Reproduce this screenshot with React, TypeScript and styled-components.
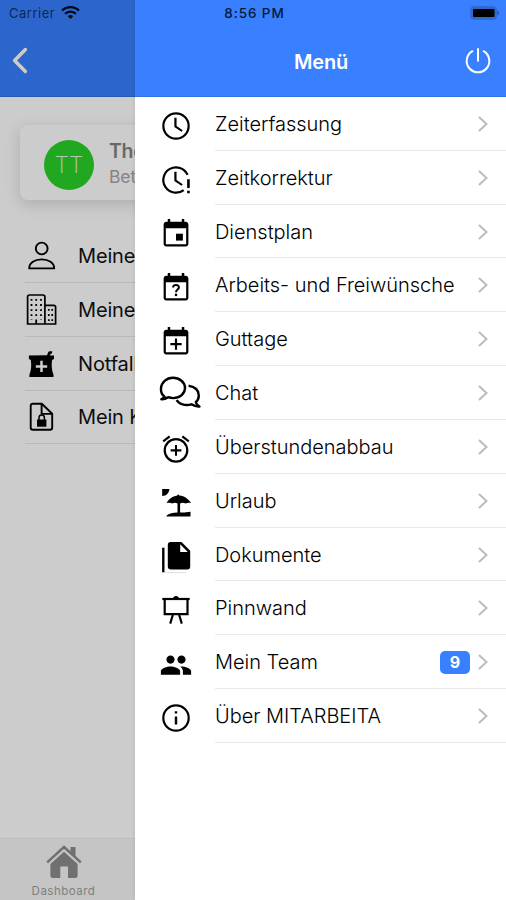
import React from "react";
import styled, { createGlobalStyle } from "styled-components";

const GlobalStyle = createGlobalStyle`
  * { box-sizing: border-box; }
  body { margin: 0; background: #fff; }
`;

const Screen = styled.div`
  position: relative;
  width: 506px;
  height: 900px;
  overflow: hidden;
  background: #fff;
  font-family: Inter, "Liberation Sans", sans-serif;
  color: #111;
`;

/* ---------- page below the drawer ---------- */

const Page = styled.div`
  display: flex;
  flex-direction: column;
  height: 100%;
`;

const PageHeader = styled.header`
  height: 97px;
  padding: 46px 0 0 11px;
  background: #3880ff;
  border-bottom: 1px solid #3171e0;
`;

const PageBody = styled.main`
  flex: 1;
  padding: 28px 20px 0;
`;

const ProfileCard = styled.section`
  display: flex;
  align-items: center;
  gap: 15px;
  height: 75px;
  padding: 5px 0 0 24px;
  border-radius: 8px;
  background: #fff;
  box-shadow: 0 4px 16px rgba(0, 0, 0, 0.16);
`;

const Avatar = styled.div`
  display: grid;
  place-items: center;
  width: 50px;
  height: 50px;
  border-radius: 50%;
  background: #28d228;
  color: #e2f8e2;
  font-size: 23px;
  font-weight: 200;
`;

const ProfileName = styled.div`
  margin-top: -3px;
  font-size: 19.5px;
  line-height: 26px;
  font-weight: 600;
  letter-spacing: -0.3px;
  color: #838383;
`;

const ProfileRole = styled.div`
  font-size: 17.5px;
  line-height: 25px;
  letter-spacing: -0.1px;
  color: #a6a6a6;
`;

const PageList = styled.ul`
  list-style: none;
  margin: 29px 0 0;
  padding: 0;
`;

const PageRow = styled.li`
  display: flex;
  align-items: center;
  gap: 14px;
  height: 53.85px;
  position: relative;
  font-size: 20px;
  letter-spacing: -0.15px;
  white-space: nowrap;

  &::after {
    content: "";
    position: absolute;
    left: 5px;
    right: 0;
    bottom: 0;
    height: 1px;
    background: #e8e8e8;
  }
`;

const TabBar = styled.nav`
  height: 62px;
  background: #f7f7f7;
  border-top: 1px solid #eeeeee;
`;

const Tab = styled.div`
  display: flex;
  flex-direction: column;
  align-items: center;
  width: 127px;
  padding-top: 6px;
  gap: 4px;
  color: #8c8c8c;
`;

const TabLabel = styled.span`
  font-size: 11.5px;
  line-height: 16px;
  letter-spacing: 0.5px;
  color: #a0a0a0;
`;

const Backdrop = styled.div`
  position: absolute;
  inset: 0;
  background: rgba(0, 0, 0, 0.2);
`;

/* ---------- drawer ---------- */

const Drawer = styled.aside`
  position: absolute;
  top: 0;
  right: 0;
  bottom: 0;
  width: 371px;
  background: #fff;
  box-shadow: 0 0 4px rgba(0, 0, 0, 0.12);
`;

const DrawerHeader = styled.header`
  display: grid;
  grid-template-columns: 44px 1fr 26px;
  align-items: center;
  height: 97px;
  padding: 26px 15px 0 0;
  background: #3880ff;
  border-bottom: 1px solid #3171e0;
  color: #fff;
`;

const DrawerTitle = styled.h1`
  grid-column: 2;
  margin: 0 2px 0 0;
  padding-top: 1px;
  text-align: center;
  font-size: 20px;
  font-weight: 600;
  letter-spacing: -0.2px;
`;

const MenuList = styled.ul`
  list-style: none;
  margin: 0;
  padding: 0 0 0 19px;
`;

const MenuRow = styled.li`
  display: flex;
  height: 53.83px;
`;

const MenuIcon = styled.span`
  flex: none;
  width: 61px;
  padding-top: 7.3px;
`;

const MenuContent = styled.div`
  flex: 1;
  display: flex;
  align-items: center;
  padding: 1px 18.5px 0 0;
  border-bottom: 1px solid #e9e9e9;
`;

const MenuLabel = styled.span`
  flex: 1;
  font-size: 20px;
  font-weight: 300;
  line-height: 26px;
  color: #000;
  letter-spacing: -0.02px;
  white-space: nowrap;
`;

const Badge = styled.span`
  width: 30px;
  height: 23px;
  margin-right: 7.5px;
  border-radius: 5px;
  background: #3880ff;
  color: #fff;
  font-size: 16px;
  line-height: 23px;
  font-weight: 700;
  text-align: center;
`;

/* ---------- status bar ---------- */

const StatusBar = styled.div`
  position: absolute;
  top: 0;
  left: 0;
  right: 0;
  display: grid;
  grid-template-columns: 1fr auto 1fr;
  align-items: center;
  height: 26px;
  padding: 0 6px 0 9px;
  font-size: 13px;
  color: #05183a;
`;

const StatusLeft = styled.div`
  display: flex;
  align-items: center;
  gap: 6px;
  letter-spacing: 0.5px;
  color: #0d2856;
`;

const StatusTime = styled.div`
  font-size: 13.5px;
  font-weight: 500;
  letter-spacing: 0.9px;
`;

const StatusRight = styled.div`
  display: flex;
  justify-content: flex-end;
`;

const Svg = styled.svg`
  display: block;
  flex: none;
  overflow: visible;
`;

/* ---------- icons ---------- */

type IconProps = { children: React.ReactNode };

/* 44px canvas, one unit per pixel */
const Canvas = ({ children }: IconProps) => (
  <Svg width="44" height="44" viewBox="0 0 44 44" fill="none" stroke="#000" strokeWidth="1.9">
    {children}
  </Svg>
);

/* 24-unit glyph enlarged to 33px in the middle of the 44px canvas */
const Glyph = ({ children }: IconProps) => (
  <Svg width="44" height="44" viewBox="-4 -4 32 32" fill="#000">
    {children}
  </Svg>
);

const CalendarFrame = () => (
  <path d="M16.200 1v2H7.800V1H6v2H5c-1.110 0-1.990.9-1.990 2L3 19c0 1.100.89 2 2 2h14c1.100 0 2-.9 2-2V5c0-1.100-.9-2-2-2h-1V1h-1.800zm3.200 18.400H4.600V7.800h14.800v11.600z" />
);

const ClockHands = () => <path d="M12.400 6h-1.600v6.700l5.200 3.500.9-1.200-4.500-3z" />;

const icons = {
  clock: (
    <Glyph>
      <circle cx="12" cy="12" r="9.200" fill="none" stroke="#000" strokeWidth="1.600" />
      <ClockHands />
    </Glyph>
  ),
  clockAlert: (
    <Glyph>
      <path
        d="M20.400 8.300A9.200 9.200 0 1 0 17.600 19.300"
        fill="none"
        stroke="#000"
        strokeWidth="1.600"
      />
      <ClockHands />
      <path d="M20.100 11.400H22v6.500h-1.900zM20.100 19.800H22v1.800h-1.900z" />
    </Glyph>
  ),
  calendar: (
    <Glyph>
      <CalendarFrame />
      <path d="M12 11.800h5v5h-5z" />
    </Glyph>
  ),
  calendarQuestion: (
    <Glyph>
      <CalendarFrame />
      <path
        d="M9.900 11.600c0-1.100.9-1.800 2.100-1.800s2.100.7 2.100 1.800c0 1.500-2.100 1.600-2.100 3.400"
        fill="none"
        stroke="#000"
        strokeWidth="1.500"
      />
      <circle cx="12" cy="17" r=".95" />
    </Glyph>
  ),
  calendarPlus: (
    <Glyph>
      <CalendarFrame />
      <path d="M11.200 9.400h1.600v3.300H16.100v1.600h-3.300v3.300h-1.600v-3.300H7.900v-1.600h3.300z" />
    </Glyph>
  ),
  chat: (
    <Canvas>
      <g transform="translate(0 -2.300)" strokeWidth="2.400" strokeLinejoin="round">
        <path d="M10.600 26C8 24.100 6.700 20.800 7 17.400 7.400 11.800 12.400 7.100 19 7.100S31 11.600 31 17.200 26 27.400 19.200 27.400c-2 0-3.600-.3-5.100-.9-1.900 1.300-4.300 2.200-6.800 2 1.500-.8 2.700-1.500 3.300-2.500z" />
        <path d="M34.600 15.100c6.400 1.100 10.200 4.600 10.200 9.600 0 2.700-1.100 5-3 6.800.6 2.400 2.200 3.500 3.700 4.300-3 .3-5.800-.7-8-2.200-6.400 1.900-12.600-.2-14.800-4.300" />
      </g>
    </Canvas>
  ),
  alarmAdd: (
    <Glyph>
      <path d="M7.880 3.390 6.900 2.100 2.200 5.900l.95 1.200 4.730-3.710zM21.800 5.900 17.100 2.100l-.98 1.290L20.850 7.100zM12 4c-4.970 0-9 4.030-9 9s4.020 9 9 9c4.970 0 9-4.030 9-9s-4.030-9-9-9zm0 16.400a7.400 7.400 0 1 1 0-14.800 7.400 7.400 0 0 1 0 14.800zM12.750 9.100h-1.500v3.150H8.100v1.500h3.150v3.150h1.500v-3.150h3.150v-1.500h-3.150z" />
    </Glyph>
  ),
  beach: (
    <Canvas>
      <g fill="#000" stroke="none">
        <path d="M8.200 8h7.200c-.2 3.800-3 6.900-7.200 7z" />
        <path d="M12.600 22.300c1.700-4.300 5.700-7 10.600-7.900l1-1.200 1.200 1.200c5 .6 9.500 3.500 11.800 7.900-2.100-.7-4-.6-5.700.3-1.800-1-3.600-1.100-5.400-.1v8.900h4.200l6.200-.6v4.700H12.600v-1c2.500-1.900 6-2.900 10.900-3V22.500c-1.800-.9-3.500-.9-5.200.1-1.700-.9-3.600-1.100-5.700-.3z" />
      </g>
    </Canvas>
  ),
  documents: (
    <Canvas>
      <path d="M9.300 12.700v24.700" strokeWidth="2.400" />
      <path d="M9.300 37.600h22.500" stroke="#dedede" strokeWidth="1" />
      <path
        d="M17 7h10.500l8.700 8.800v15.700a3 3 0 0 1-3 3H16.800a3 3 0 0 1-3-3V10A3 3 0 0 1 17 7zm9.200 2.300v7.600h7.600z"
        fill="#000"
        fillRule="evenodd"
        stroke="none"
      />
    </Canvas>
  ),
  board: (
    <Canvas>
      <path d="M8.300 10h27.400" strokeWidth="2.200" />
      <path d="M10.700 10v15.200h22.800V10" strokeWidth="2.200" />
      <path d="M19 9.500c0-3.500 6-3.500 6 0z" fill="#000" stroke="none" />
      <path d="M18.800 26l-2.600 8.600M25.200 26l2.600 8.600" strokeWidth="2.200" />
    </Canvas>
  ),
  team: (
    <Glyph>
      <path d="M16 11c1.660 0 2.990-1.340 2.990-3S17.660 5 16 5c-1.660 0-3 1.340-3 3s1.340 3 3 3zm-8 0c1.660 0 2.990-1.340 2.990-3S9.660 5 8 5C6.340 5 5 6.340 5 8s1.340 3 3 3zm0 2c-2.330 0-7 1.170-7 3.500V19h14v-2.500c0-2.330-4.670-3.500-7-3.500zm8 0c-.29 0-.62.020-.97.050 1.160.84 1.970 1.970 1.970 3.450V19h6v-2.500c0-2.330-4.670-3.500-7-3.500z" />
    </Glyph>
  ),
  info: (
    <Canvas>
      <circle cx="22" cy="22" r="12.700" strokeWidth="2.200" />
      <path d="M22 20.500v8M22 15.200v2.400" strokeWidth="2.400" />
    </Canvas>
  ),
  person: (
    <Canvas>
      <circle cx="21.700" cy="14.500" r="5.900" />
      <path d="M9.200 34.400c0-5.500 5.500-9 12.500-9s12.500 3.500 12.500 9z" strokeLinejoin="round" />
    </Canvas>
  ),
  buildings: (
    <Canvas>
      <path
        d="M7.600 36V8.800a1.800 1.800 0 0 1 1.800-1.800h13.700a1.800 1.800 0 0 1 1.800 1.800V36zM25 17.300h8.900a1.700 1.700 0 0 1 1.700 1.700v17H25"
        strokeWidth="1.700"
      />
      <path d="M11.500 11v21M16.200 11v21M21 11v21" strokeDasharray="1.800 3.300" strokeWidth="1.800" />
      <path d="M28.800 21v12M32.200 21v12" strokeDasharray="1.800 3.300" strokeWidth="1.700" />
      <path d="M16.200 32v4" strokeWidth="1.800" />
    </Canvas>
  ),
  mortar: (
    <Canvas>
      <g fill="#000" stroke="none">
        <path d="M27 13.300 28.300 10c.3-.8 1.300-1 4-.8l-.4 2.200-1.300.3-.6 1.800h4v3.500l-1.900 1c-.8 5.200-.5 10.200 1.400 14.800v2.200H9.400v-2.200c1.900-4.600 2.200-9.600 1.400-14.800l-1.900-1v-3.500z" />
      </g>
      <path d="M21.500 18.700v11.400M15.800 24.400h11.400" stroke="#fff" strokeWidth="2.500" />
    </Canvas>
  ),
  lockedFile: (
    <Canvas>
      <path
        d="M13 8.700h8.800l10.400 10V32.500a2.300 2.300 0 0 1-2.300 2.300H13a2.300 2.300 0 0 1-2.300-2.300V11A2.300 2.300 0 0 1 13 8.700zM21.600 9v9.900h10.400"
        strokeWidth="1.900"
        strokeLinejoin="round"
      />
      <path d="M17 24.500h9.400v7.200H17z" fill="#000" stroke="none" />
      <path d="M19 25v-2.300a2.700 2.700 0 0 1 5.400 0V25" strokeWidth="1.500" />
    </Canvas>
  ),
};

type IconName = keyof typeof icons;

const BackIcon = () => (
  <Svg width="18" height="29" viewBox="0 0 18 29" fill="none">
    <path
      d="M14.400 3.500 3.600 14.500l10.800 11"
      stroke="#fff"
      strokeWidth="3.500"
      strokeLinecap="round"
      strokeLinejoin="round"
    />
  </Svg>
);

const PowerIcon = () => (
  <Svg width="26" height="26" viewBox="0 0 26 26" fill="none" stroke="#fff" strokeWidth="2" strokeLinecap="round">
    <path d="M7.400 3.200a11.300 11.300 0 1 0 11.200 0M13 1v11.800" />
  </Svg>
);

const Chevron = () => (
  <Svg width="10" height="16" viewBox="0 0 10 16" fill="none">
    <path d="M1 1l7.500 7L1 15" stroke="#bcbcbc" strokeWidth="2" />
  </Svg>
);

const WifiIcon = () => (
  <Svg width="19" height="14" viewBox="0 0 19 14" fill="none" stroke="#020a18" strokeWidth="2.200">
    <path d="M1.100 4.600a12 12 0 0 1 16.800 0M4.100 7.800a7.700 7.700 0 0 1 10.800 0" />
    <path d="M9.500 12.900 6.800 10.200a3.900 3.900 0 0 1 5.400 0z" fill="#020a18" stroke="none" />
  </Svg>
);

const BatteryIcon = () => (
  <Svg width="30" height="14" viewBox="0 0 30 14">
    <rect x=".8" y=".7" width="25.600" height="12.600" rx="3" fill="#3069c9" stroke="#2f68cc" strokeWidth="1" />
    <path d="M27.300 4.500c2.600.8 2.600 4.200 0 5z" fill="#2759b2" />
    <rect x="3" y="3" width="21.500" height="8" rx="1" fill="#000" />
  </Svg>
);

const HomeIcon = () => (
  <Svg width="36" height="34" viewBox="0 0 36 34" fill="currentColor">
    <path d="M24.500 2h5v11l-5-4.700z" />
    <path d="M18 6.700 31.600 19v11.700a2.300 2.300 0 0 1-2.300 2.300H22V21.500h-7.700V33H6.700a2.300 2.300 0 0 1-2.300-2.300V19z" />
    <path d="M2.200 19 18 4.600 33.800 19" fill="none" stroke="#f7f7f7" strokeWidth="1.300" />
    <path d="M1.200 17.300 18 2 34.800 17.300" fill="none" stroke="currentColor" strokeWidth="2.500" />
  </Svg>
);

/* ---------- data ---------- */

const menuItems: { icon: IconName; label: string; badge?: number }[] = [
  { icon: "clock", label: "Zeiterfassung" },
  { icon: "clockAlert", label: "Zeitkorrektur" },
  { icon: "calendar", label: "Dienstplan" },
  { icon: "calendarQuestion", label: "Arbeits- und Freiwünsche" },
  { icon: "calendarPlus", label: "Guttage" },
  { icon: "chat", label: "Chat" },
  { icon: "alarmAdd", label: "Überstundenabbau" },
  { icon: "beach", label: "Urlaub" },
  { icon: "documents", label: "Dokumente" },
  { icon: "board", label: "Pinnwand" },
  { icon: "team", label: "Mein Team", badge: 9 },
  { icon: "info", label: "Über MITARBEITA" },
];

const pageItems: { icon: IconName; label: string }[] = [
  { icon: "person", label: "Meine" },
  { icon: "buildings", label: "Meine" },
  { icon: "mortar", label: "Notfall" },
  { icon: "lockedFile", label: "Mein K" },
];

export default function App() {
  return (
    <Screen>
      <GlobalStyle />
      <Page>
        <PageHeader>
          <BackIcon />
        </PageHeader>
        <PageBody>
          <ProfileCard>
            <Avatar>TT</Avatar>
            <div>
              <ProfileName>The</ProfileName>
              <ProfileRole>Bet</ProfileRole>
            </div>
          </ProfileCard>
          <PageList>
            {pageItems.map((item) => (
              <PageRow key={item.icon}>
                {icons[item.icon]}
                {item.label}
              </PageRow>
            ))}
          </PageList>
        </PageBody>
        <TabBar>
          <Tab>
            <HomeIcon />
            <TabLabel>Dashboard</TabLabel>
          </Tab>
        </TabBar>
      </Page>
      <Backdrop />
      <Drawer>
        <DrawerHeader>
          <DrawerTitle>Menü</DrawerTitle>
          <PowerIcon />
        </DrawerHeader>
        <MenuList>
          {menuItems.map((item) => (
            <MenuRow key={item.icon}>
              <MenuIcon>{icons[item.icon]}</MenuIcon>
              <MenuContent>
                <MenuLabel>{item.label}</MenuLabel>
                {item.badge !== undefined && <Badge>{item.badge}</Badge>}
                <Chevron />
              </MenuContent>
            </MenuRow>
          ))}
        </MenuList>
      </Drawer>
      <StatusBar>
        <StatusLeft>
          Carrier
          <WifiIcon />
        </StatusLeft>
        <StatusTime>8:56 PM</StatusTime>
        <StatusRight>
          <BatteryIcon />
        </StatusRight>
      </StatusBar>
    </Screen>
  );
}
